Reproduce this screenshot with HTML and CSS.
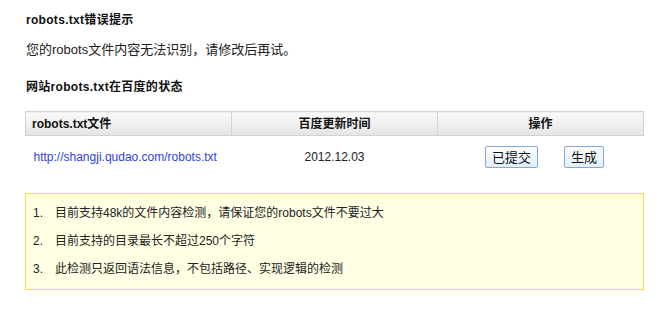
FILE: index.html
```html
<!DOCTYPE html>
<html lang="zh">
<head>
<meta charset="utf-8">
<title>robots.txt错误提示</title>
<link rel="stylesheet" href="styles.css">
</head>
<body>
<div class="page">
  <h1 class="title">robots.txt错误提示</h1>
  <p class="msg">您的robots文件内容无法识别，请修改后再试。</p>
  <h2 class="title sub">网站robots.txt在百度的状态</h2>
  <table class="status">
    <thead>
      <tr>
        <th class="left">robots.txt文件</th>
        <th>百度更新时间</th>
        <th>操作</th>
      </tr>
    </thead>
    <tbody>
      <tr>
        <td class="left link-cell"><a class="link" href="#">http://shangji.qudao.com/robots.txt</a></td>
        <td class="center">2012.12.03</td>
        <td class="center">
          <div class="actions">
            <button class="btn">已提交</button>
            <button class="btn">生成</button>
          </div>
        </td>
      </tr>
    </tbody>
  </table>
  <div class="tips">
    <div class="tip"><span class="num">1.</span><span>目前支持48k的文件内容检测，请保证您的robots文件不要过大</span></div>
    <div class="tip"><span class="num">2.</span><span>目前支持的目录最长不超过250个字符</span></div>
    <div class="tip"><span class="num">3.</span><span>此检测只返回语法信息，不包括路径、实现逻辑的检测</span></div>
  </div>
</div>
</body>
</html>
```

FILE: styles.css
```css
* { box-sizing: border-box; }
html, body { margin: 0; padding: 0; background: #fff; }
body {
  font-family: "Liberation Sans", Arial, "Noto Sans CJK SC", sans-serif;
  font-size: 12px;
  color: #222;
}
.page {
  width: 644px;
  padding: 10px 0 0 25px;
}
.title {
  margin: 0;
  font-size: 12px;
  font-weight: bold;
  line-height: 20px;
  color: #111;
  padding-left: 1px;
  letter-spacing: 0.3px;
}
.msg {
  margin: 10px 0 0 0;
  font-size: 13px;
  line-height: 20px;
  padding-left: 1px;
}
.sub {
  margin-top: 17px;
}
.status {
  margin-top: 14px;
  width: 619px;
  border-collapse: collapse;
  table-layout: fixed;
}
.status th {
  height: 24px;
  padding: 0 0 2px 0;
  font-weight: bold;
  font-size: 12px;
  color: #111;
  text-align: center;
  border: 1px solid #d2d2d2;
  background: linear-gradient(#fafafa, #e4e4e4);
}
.status th.left {
  text-align: left;
  padding-left: 6px;
}
.status td {
  height: 42px;
  padding: 0;
  color: #222;
}
.status td.link-cell { padding-left: 8px; }
.status td.center { text-align: center; }
.link {
  color: #2f3fd6;
  text-decoration: none;
}
.actions {
  display: flex;
  justify-content: center;
  gap: 26px;
  padding-left: 8px;
}
.btn {
  height: 22px;
  padding: 0 6px;
  font-family: "Noto Sans CJK SC", sans-serif;
  font-size: 13px;
  line-height: 18px;
  color: #111;
  border: 1px solid #7ea9d6;
  border-radius: 2px;
  background: linear-gradient(#ffffff, #e3eefa);
  cursor: pointer;
}
.tips {
  margin-top: 15px;
  width: 619px;
  height: 97px;
  padding: 5px 0 0 7px;
  background: #ffffe4;
  border: 1px solid #f6da55;
}
.tip {
  display: flex;
  line-height: 28px;
  color: #222;
}
.num {
  width: 22px;
  flex: none;
}
```
